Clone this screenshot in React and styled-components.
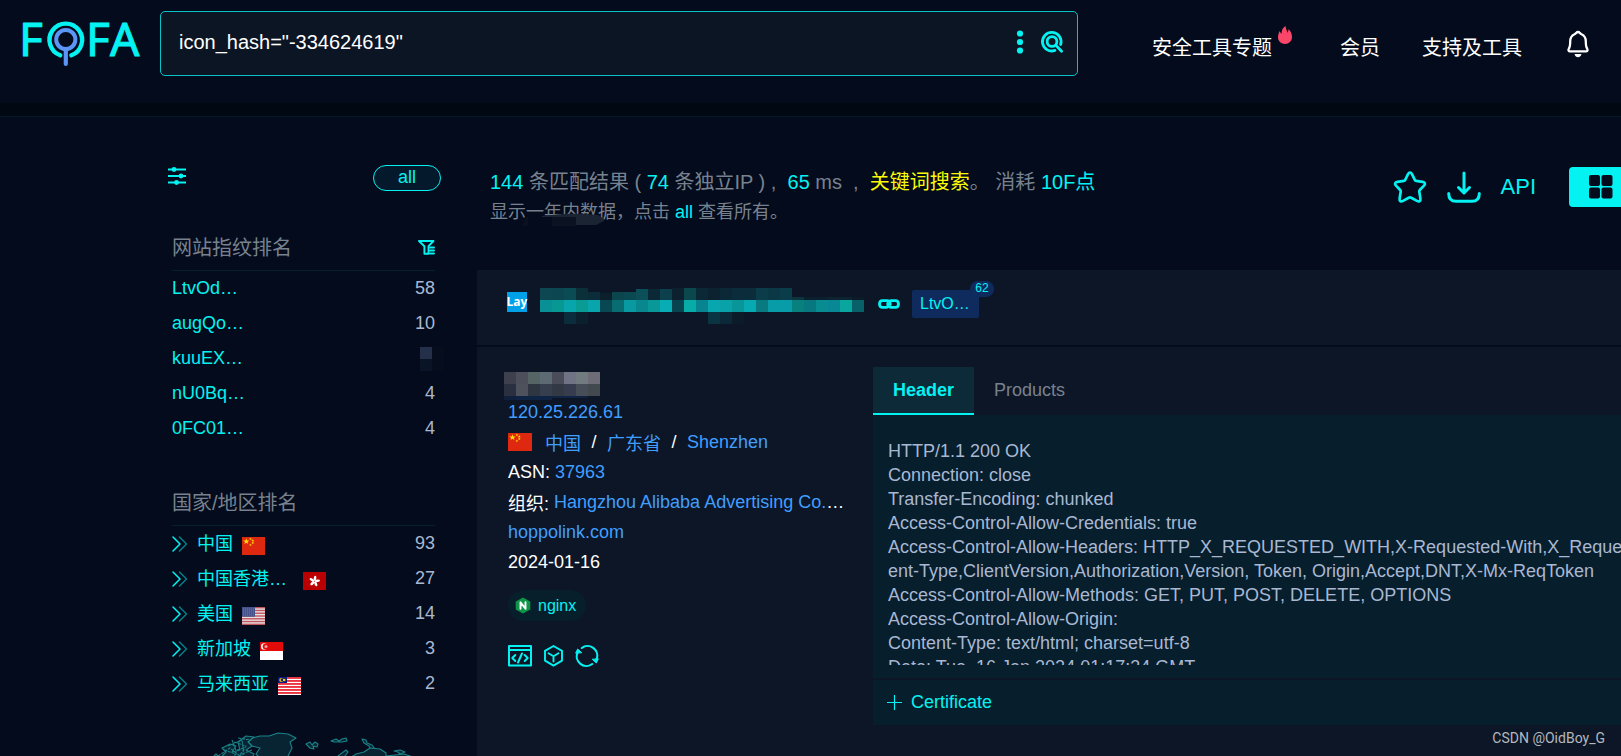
import React from "react";
import styled, { createGlobalStyle } from "styled-components";

const cyan = "#05f2f2";
const blue = "#409eff";
const muted = "#78828f";
const pale = "#a9b8d2";
const ink = "#030b1c";
const surface = "#0d1626";
const panel = "#071e2d";

const GlobalStyle = createGlobalStyle`
  *, *::before, *::after { box-sizing: border-box; }
  body {
    margin: 0;
    background: ${ink};
    color: #fff;
    font-family: "Liberation Sans", "Noto Sans CJK SC", sans-serif;
    font-size: 18px;
  }
  a { color: inherit; text-decoration: none; }
  button, input { font: inherit; color: inherit; }
  button { background: none; border: 0; padding: 0; cursor: pointer; }
  svg { display: block; flex: none; }
  h1, h2, ul, p, pre { margin: 0; padding: 0; }
  ul { list-style: none; }
`;

const Page = styled.div`
  position: relative;
  display: flex;
  flex-direction: column;
  height: 100vh;
  overflow: hidden;
`;

/* ---------- header ---------- */

const Header = styled.header`
  display: flex;
  flex: none;
  align-items: center;
  padding: 11px 29px 27px 17px;
`;

const HeaderBand = styled.div`
  flex: none;
  height: 14px;
  background: #020812;
  border-bottom: 1px solid #04192a;
`;

const LogoLink = styled.a`
  width: 143px;
`;

const SearchForm = styled.form`
  display: flex;
  flex: 1;
  align-items: center;
  gap: 16px;
  height: 65px;
  padding: 0 13px 4px 18px;
  background: #0c1524;
  border: 1px solid #07c3c8;
  border-radius: 5px;
`;

const SearchInput = styled.input`
  flex: 1;
  min-width: 0;
  padding: 2px 0 0;
  background: transparent;
  border: 0;
  outline: none;
  font-size: 20px;
`;

const Nav = styled.nav`
  display: flex;
  align-items: center;
  gap: 42px;
  margin-left: 74px;
  font-size: 20px;
  white-space: nowrap;
`;

const NavLink = styled.a`
  display: flex;
  align-items: flex-start;
  gap: 6px;
  padding-top: 8px;
  line-height: 30px;
`;

const FlameSlot = styled.span`
  width: 20px;
  height: 30px;
  margin-top: -7px;
`;

/* ---------- sidebar ---------- */

const Body = styled.div`
  display: flex;
  flex: 1;
  min-height: 0;
`;

const Sidebar = styled.aside`
  display: flex;
  flex: none;
  flex-direction: column;
  gap: 34px;
  width: 477px;
  padding: 48px 42px 0 172px;
`;

const FilterBar = styled.div`
  display: flex;
  align-items: center;
  justify-content: space-between;
  margin: 0 -6px 0 -4px;
`;

const FilterButton = styled.button`
  padding-bottom: 4px;
`;

const AllPill = styled.button`
  width: 68px;
  height: 26px;
  padding-bottom: 2px;
  background: #041a2c;
  border: 1px solid ${cyan};
  border-radius: 13px;
  color: ${cyan};
  line-height: 22px;
`;

const RankHead = styled.div`
  display: flex;
  align-items: center;
  justify-content: space-between;
  height: 46px;
  border-bottom: 1px solid #06202c;
`;

const RankTitle = styled.h2`
  padding-bottom: 2px;
  color: ${muted};
  font-size: 20px;
  font-weight: 400;
`;

const RankRow = styled.li`
  display: flex;
  align-items: center;
  height: 35px;
  color: ${pale};
`;

const RankName = styled.a`
  min-width: ${(p) => (p.$clipped ? "97px" : "0")};
  padding-bottom: ${(p) => (p.$raised ? "4px" : "0")};
  color: ${cyan};
`;

const RankCount = styled.span`
  margin-left: auto;
`;

const Chevrons = styled.svg`
  margin-right: 10px;
`;

const FlagSlot = styled.span`
  margin-left: 9px;
  padding-top: 4px;
`;

/* ---------- results ---------- */

const Main = styled.main`
  flex: 1;
  min-width: 0;
  overflow: hidden;
`;

const Wide = styled.div`
  display: flex;
  flex-direction: column;
  width: calc(100% + 12px);
  height: 100%;
`;

const ResultBar = styled.div`
  display: flex;
  flex: none;
  justify-content: space-between;
  padding: 50px 0 43px 13px;
`;

const Summary = styled.div`
  position: relative;
  color: ${muted};
  line-height: 30px;
  white-space: pre;
`;

const SummaryLine = styled.p`
  font-size: ${(p) => (p.$small ? "18px" : "20px")};
`;

const Hit = styled.span`
  color: ${(p) => (p.$yellow ? "#fbfb05" : cyan)};
`;

const SummarySmudge = styled.svg`
  position: absolute;
  left: 32px;
  top: 44px;
`;

const Tools = styled.div`
  display: flex;
  align-items: center;
  gap: 20px;
  height: 40px;
`;

const ToolButton = styled.button`
  color: ${cyan};
  font-size: 22px;
`;

const ViewButton = styled.button`
  display: flex;
  align-items: center;
  width: 64px;
  height: 40px;
  margin-left: 13px;
  padding-left: 20px;
  background: ${cyan};
  border-radius: 4px;
`;

const CardHead = styled.div`
  display: flex;
  flex: none;
  align-items: center;
  height: 75px;
  margin-bottom: 2px;
  padding: 0 30px 7px;
  background: ${surface};
`;

const SiteIcon = styled.span`
  display: flex;
  align-items: center;
  justify-content: center;
  width: 20px;
  height: 20px;
  margin-bottom: 4px;
  background: #00a0e9;
  font-family: "Open Sans", sans-serif;
  font-size: 12px;
  font-weight: 700;
  line-height: 20px;
`;

const HostMosaic = styled.svg`
  margin: 4px 14px 0 13px;
`;

const LinkButton = styled.a`
  margin-right: 12px;
`;

const FidTag = styled.a`
  position: relative;
  width: 67px;
  height: 28px;
  padding-left: 8px;
  background: #0f2b5e;
  border-radius: 2px;
  color: ${cyan};
  font-size: 16px;
  line-height: 28px;
`;

const FidBadge = styled.span`
  position: absolute;
  top: -9px;
  right: -15px;
  width: 24px;
  height: 16px;
  background: #0f2b5e;
  border-radius: 8px;
  font-size: 12px;
  line-height: 15px;
  text-align: center;
`;

const CardBody = styled.div`
  display: flex;
  flex: 1;
  padding: 20px 0 0 31px;
  background: ${surface};
`;

const Facts = styled.div`
  flex: none;
  width: 365px;
`;

const Fact = styled.div`
  display: flex;
  align-items: center;
  height: 30px;
  white-space: pre;
`;

const FactLink = styled.a`
  color: ${blue};
`;

const Slash = styled.span`
  width: 26px;
  text-align: center;
`;

const FactFlag = styled.span`
  margin-right: 13px;
`;

const TitleMosaic = styled.svg`
  margin: 8px 0 0 -4px;
`;

const ProductChip = styled.a`
  display: inline-flex;
  align-items: center;
  gap: 7px;
  height: 31px;
  margin-top: 13px;
  padding: 0 10px 0 7px;
  background: #071e2b;
  border-radius: 16px;
  color: ${cyan};
  font-size: 16px;
`;

const Actions = styled.div`
  display: flex;
  align-items: center;
  gap: 12px;
  margin-top: 24px;
`;

const Details = styled.section`
  flex: 1;
  min-width: 0;
`;

const Tabs = styled.div`
  display: flex;
`;

const Tab = styled.button`
  height: 48px;
  padding: 0 20px;
  border-bottom: 2px solid ${(p) => (p.$active ? cyan : "transparent")};
  background: ${(p) => (p.$active ? "#0c2a38" : "transparent")};
  color: ${(p) => (p.$active ? cyan : muted)};
  font-weight: ${(p) => (p.$active ? 700 : 400)};
`;

const RawPanel = styled.div`
  padding: 24px 0 13px 15px;
  background: ${panel};
`;

const RawText = styled.pre`
  height: 226px;
  overflow: hidden;
  color: ${pale};
  font-family: inherit;
  line-height: 24px;
`;

const Certificate = styled.button`
  display: flex;
  align-items: center;
  gap: 9px;
  width: 100%;
  height: 45px;
  margin-top: 2px;
  padding-left: 14px;
  background: ${panel};
  color: ${cyan};
`;

const Watermark = styled.div`
  position: absolute;
  right: 16px;
  bottom: 9px;
  color: #b4b8be;
  font-family: Roboto, sans-serif;
  font-size: 14px;
  line-height: 18px;
`;

/* ---------- drawings ---------- */

function Logo() {
  return (
    <svg width="126" height="65" viewBox="17 11 126 65" overflow="visible" role="img" aria-label="FOFA">
      <g fill={cyan} stroke={cyan} strokeWidth="1" strokeLinejoin="round" fontFamily="'Noto Sans', sans-serif" fontSize="46">
        <text x="19" y="56">F</text>
        <text x="86" y="56">F</text>
        <text x="110" y="56">A</text>
      </g>
      <path d="M60.2 55.2A16.3 16.3 0 1 1 71.4 55.2" fill="none" stroke={cyan} strokeWidth="4.4" strokeLinecap="round" />
      <circle cx="65.8" cy="39.5" r="9.6" fill="none" stroke="#5b96f7" strokeWidth="4" />
      <path d="M65.8 49V64" stroke="#5b96f7" strokeWidth="4.2" strokeLinecap="round" />
    </svg>
  );
}

const line = { fill: "none", stroke: cyan, strokeLinecap: "round", strokeLinejoin: "round" };

function Dots() {
  return (
    <svg width="8" height="26" fill={cyan}>
      <circle cx="4" cy="4.5" r="3.1" />
      <circle cx="4" cy="13" r="3.1" />
      <circle cx="4" cy="21.5" r="3.1" />
    </svg>
  );
}

function SearchIcon() {
  return (
    <svg width="24" height="24" viewBox="0 0 24 24" {...line} strokeWidth="2.8">
      <path d="M14.9 20.4A9.300 9.300 0 1 1 20.600 14.500" />
      <circle cx="12" cy="11.500" r="4.9" />
      <path d="M15.8 15.3L21.6 21.2" />
    </svg>
  );
}

function Flame() {
  return (
    <svg width="14" height="18" viewBox="0 0 14 18" fill="#fa4669">
      <path d="M7.600 0C7.500 2.500 9 4 9.300 6.800C10 6 10.600 4.800 10.500 3C12.800 5 14 8 14 11C14 15 11 18 7 18C3 18 0 15.200 0 11.300C0 8.800 .8 7 1.500 5C2.200 6 2.600 7 3.600 7.800C3.400 4 5 1.400 7.600 0Z" />
    </svg>
  );
}

function Bell() {
  return (
    <svg width="28" height="28" viewBox="0 0 28 28" fill="none" stroke="#fff" strokeWidth="2.300" strokeLinejoin="round">
      <path d="M14 2C12.300 2 12.200 3.600 10.500 4.300C7.500 5.600 6.200 8.300 6.200 11.500C6.200 15.500 6 17 4.900 18.500C4.100 20 4.400 21.300 5.600 21.300H22.400C23.600 21.300 23.900 20 23.100 18.500C22 17 21.800 15.500 21.800 11.500C21.800 8.300 20.500 5.600 17.500 4.300C15.800 3.600 15.700 2 14 2Z" />
      <path d="M10.500 24H17.500C16.900 26.200 15.500 27.300 14 27.300S11.100 26.200 10.500 24Z" fill="#fff" stroke="none" />
    </svg>
  );
}

function Sliders() {
  return (
    <svg width="18" height="18" viewBox="0 0 18 18" stroke={cyan} fill={cyan} strokeWidth="1.8">
      <path d="M0 2.500H18M0 9H18M0 15.500H18" />
      <g stroke="none">
        <circle cx="6" cy="2.500" r="2.400" />
        <circle cx="13" cy="9" r="2.400" />
        <circle cx="8.500" cy="15.500" r="2.400" />
      </g>
    </svg>
  );
}

function Funnel() {
  return (
    <svg width="17" height="15" viewBox="0 0 17 15" {...line} strokeWidth="1.900">
      <path d="M1 1H15.500L10.500 6.200V13.800H6.400V6.200Z" />
      <path d="M12 7.500H16M12 10.500H16M12 13.500H16" />
    </svg>
  );
}

function DoubleChevron() {
  return (
    <Chevrons width="15" height="16" viewBox="0 0 15 16" {...line} strokeWidth="1.5">
      <path d="M1 1L8 8L1 15" />
      <path d="M7.500 1L14.500 8L7.500 15" opacity=".5" />
    </Chevrons>
  );
}

const star = (cx, cy, r) =>
  Array.from({ length: 10 }, (_, i) => {
    const a = (Math.PI * i) / 5 - Math.PI / 2;
    const q = i % 2 ? r * 0.4 : r;
    return `${(cx + q * Math.cos(a)).toFixed(2)},${(cy + q * Math.sin(a)).toFixed(2)}`;
  }).join(" ");

function Flag({ code, width = 23 }) {
  return (
    <svg width={width} height="18" viewBox="0 0 23 18" preserveAspectRatio="none">
      {code === "cn" && (
        <>
          <rect width="23" height="18" fill="#de2910" />
          <g fill="#ffde00">
            <polygon points={star(4.300, 4.500, 3.200)} />
            <polygon points={star(8.500, 1.900, 1.500)} />
            <polygon points={star(10.800, 3.600, 1.500)} />
            <polygon points={star(10.800, 6, 1.500)} />
            <polygon points={star(8.500, 7.900, 1.500)} />
          </g>
        </>
      )}
      {code === "hk" && (
        <>
          <rect width="23" height="18" fill="#ba0000" />
          <g fill="#fff">
            {[0, 72, 144, 216, 288].map((a) => (
              <ellipse key={a} cx="11.500" cy="6.300" rx="1.300" ry="2.600" transform={`rotate(${a + 10} 11.5 9.200)`} />
            ))}
          </g>
        </>
      )}
      {code === "us" && (
        <>
          <rect width="23" height="18" fill="#e9e0e2" />
          {[0, 1, 2, 3, 4, 5, 6].map((i) => (
            <rect key={i} y={i * 2.77} width="23" height="1.400" fill="#c05560" />
          ))}
          <rect width="13" height="9.700" fill="#46538a" />
          <path d="M1 2H12M1 4H12M1 6H12M1 8H12" stroke="#6c78a2" strokeDasharray="1 1" />
        </>
      )}
      {code === "sg" && (
        <>
          <rect width="23" height="18" fill="#fff" />
          <rect width="23" height="9" fill="#e30a0a" />
          <circle cx="4.300" cy="4.500" r="3.300" fill="#fff" />
          <circle cx="5.600" cy="4.500" r="2.900" fill="#e30a0a" />
          <circle cx="6" cy="4.500" r="1.500" fill="#f6a0a0" />
        </>
      )}
      {code === "my" && (
        <>
          <rect width="23" height="18" fill="#fff" />
          {[0, 1, 2, 3, 4, 5].map((i) => (
            <rect key={i} y={i * 3} width="23" height="1.900" fill="#ea3340" />
          ))}
          <rect width="9" height="6" fill="#0b1a80" />
          <circle cx="3.300" cy="3" r="2" fill="#ffd400" />
          <circle cx="4" cy="3" r="1.400" fill="#0b1a80" />
          <circle cx="6.200" cy="3" r="1.300" fill="#ffd400" />
        </>
      )}
    </svg>
  );
}

function Mosaic({ rows, as: Svg = "svg", ...rest }) {
  return (
    <Svg {...rest} shapeRendering="crispEdges" aria-hidden="true">
      {rows.flatMap(([y, h, colors]) =>
        colors.map((c, i) => c && <rect key={`${y}-${i}`} x={i * 12} y={y} width="12" height={h} fill={c} />)
      )}
    </Svg>
  );
}

const hostCells = [
  [0, 12, ["#0d4852", "#0c4650", "#0b4c54", "#0b303a", null, null, null, null, null, null, null, "#0c202f", "#0b484e", "#0b2836", "#0c2230", "#0b2836", "#0b2c3a", "#0b2c3a", "#0b3c4a", "#0b3845", "#0b3c4a"]],
  [4, 8, [null, null, null, null, "#0b2c39", null, "#0b464f", "#0a4852"]],
  [1, 11, [null, null, null, null, null, null, null, null, "#0b5058", "#0b2836", "#0b404c"]],
  [5, 7, [null, null, null, null, null, "#0b1f2c"]],
  [9, 3, [null, null, null, null, null, null, null, null, null, null, null, null, null, null, null, null, null, null, null, null, null, "#0b343f", "#0b202c", "#0b202c", "#0b2430", "#0b2430", "#0b1c28"]],
  [12, 12, ["#089096", "#089894", "#08a6ac", "#089c94", "#08a6ac", "#084852", "#086c70", "#089aa0", "#08888e", "#089898", "#08acb4", "#084450", "#08aca6", "#088490", "#08a6ae", "#08a2a8", "#089698", "#08aab2", "#087a80", "#089ca8", "#089ca8", "#08807e", "#087880", "#088c92", "#088894", "#08a69c", "#086068"]],
  [24, 12, [null, null, "#0b2c3a", "#0b202c", null, null, null, null, null, null, null, null, null, null, "#0b3442", "#0b2838", "#0b1c28"]],
];

const titleCells = [
  [0, 12, ["#3f404e", "#4d505a", "#566466", "#5c6a74", "#4a4c5a", "#707384", "#727c80", "#6e6c76"]],
  [12, 12, ["#2b3040", "#4d525c", "#2e3642", "#353f4d", "#333944", "#373c4f", "#484e58", "#424a50"]],
  [24, 4, ["#0f1f3c", "#0f2344", "#0f2344", "#0f2344"]],
  [24, 2, [null, null, null, null, "#0f2344", "#0f2344", "#0f2040"]],
];

function WorldMap() {
  return (
    <svg width="232" height="110" viewBox="0 15 232 110" overflow="visible" stroke="#1b8288" strokeWidth="1.100" strokeLinejoin="round" fill="#082432">
      <path d="M80 18L88 16L97 16L106 13L116 14L124 18L118 22L120 28L116 36L110 46L104 54L96 50L90 40L84 34L88 28L80 26L76 22Z" />
      <path d="M38 40L44 34L48 38L54 32L50 28L58 24L64 26L60 32L68 30L66 22L74 16L82 17L76 22L80 26L74 30L82 34L78 42L68 40L60 46L48 44Z" />
      <path d="M52 30L64 34L58 40L44 38M62 22L74 26L66 38L78 38M56 26L70 20L72 34L50 42M46 36L58 28L68 36L62 44L80 46M60 20L64 30L72 28M42 40L52 36L60 38M66 18L78 20M70 34L80 30" fill="none" strokeDasharray="3 1" />
      <path d="M134 24L138 22L140 25L143 22L146 24L145 27L141 26L142 29L138 28ZM159 21L164 19L167 21L170 19L174 18L175 21L170 22L162 22Z" />
      <path d="M190 19L194 20L195 23L200 25L203 29L199 30L197 26L192 23ZM222 31L228 30L233 32L228 34L226 32Z" />
      <path d="M162 46L166 36L174 30L176 32L170 40L178 38L184 34L192 32L198 28L208 29L214 33L214 36L232 34L250 40L256 50L240 70L200 90L170 80Z" />
    </svg>
  );
}

function StarIcon() {
  return (
    <svg width="34" height="34" viewBox="0 0 34 34" {...line} strokeWidth="2.700">
      <path d="M17 2.500C17.800 2.500 18.500 3.100 19 4.200L21.800 9.800C22.100 10.400 22.500 10.700 23.200 10.800L29.500 11.800C32 12.300 32.700 13.900 31 15.600L26.800 20C26.300 20.500 26.200 21 26.300 21.700L27.400 28.500C27.700 31.100 26.300 32.100 24 30.900L18.200 27.700C17.400 27.300 16.600 27.300 15.800 27.700L10 30.900C7.700 32.100 6.300 31.100 6.600 28.500L7.700 21.700C7.800 21 7.700 20.500 7.200 20L3 15.600C1.300 13.900 2 12.300 4.500 11.800L10.800 10.800C11.500 10.700 11.900 10.400 12.200 9.800L15 4.200C15.500 3.100 16.200 2.500 17 2.500Z" />
    </svg>
  );
}

function DownloadIcon() {
  return (
    <svg width="34" height="34" viewBox="0 0 34 34" {...line} strokeWidth="3">
      <path d="M17 3V23M11.500 17.500L17 23L22.500 17.500" />
      <path d="M1.700 23.500C1.700 29 4 31.300 9 31.300H25C30 31.300 32.300 29 32.300 23.500" />
    </svg>
  );
}

function GridIcon() {
  return (
    <svg width="24" height="24" viewBox="0 0 24 24" fill={ink}>
      <rect width="11" height="11" rx="2" />
      <rect x="12.500" width="11" height="11" rx="2" />
      <rect y="12.500" width="11" height="11" rx="2" />
      <rect x="12.500" y="12.500" width="11" height="11" rx="2" />
    </svg>
  );
}

function ChainIcon() {
  return (
    <svg width="22" height="10" viewBox="0 0 22 10" {...line} strokeWidth="2.800">
      <path d="M9 8.300H4.500C2.500 8.300 1.500 7.300 1.500 5S2.500 1.700 4.500 1.700H9C11 1.700 12.300 3 12.300 5.500" />
      <path d="M13 1.700H17.500C19.500 1.700 20.500 2.700 20.500 5S19.500 8.300 17.500 8.300H13C11 8.300 9.700 7 9.700 4.500" />
    </svg>
  );
}

function NginxIcon() {
  return (
    <svg width="16" height="17" viewBox="0 0 16 17">
      <path d="M8 .5L15.300 4.500V12.500L8 16.500L.7 12.500V4.500Z" fill="#0f9548" />
      <path d="M5.500 11.700V5.300L10.500 11.700V5.300" fill="none" stroke="#fff" strokeWidth="1.900" strokeLinejoin="round" strokeLinecap="round" />
    </svg>
  );
}

function CodeWindow() {
  return (
    <svg width="24" height="22" viewBox="0 0 24 22" {...line} strokeWidth="2">
      <rect x="1" y="1" width="22" height="19.500" />
      <path d="M1 5H23M7.300 10L4.300 13L7.300 16M16.700 10L19.700 13L16.700 16M14 8.500L10 17.500" />
    </svg>
  );
}

function CubeIcon() {
  return (
    <svg width="19" height="22" viewBox="0 0 19 22" {...line} strokeWidth="1.900">
      <path d="M9.500 1L18 5.800V15.600L9.500 20.600L1 15.600V5.800Z" />
      <path d="M4.500 8.300L9.500 11.300L14.500 8.300M9.500 11.300V16.500" />
    </svg>
  );
}

function RefreshIcon() {
  return (
    <svg width="24" height="22" viewBox="0 0 24 22" {...line} strokeWidth="2.100">
      <path d="M6.800 3A9.600 9.600 0 0 1 21.400 14.500M17.200 19A9.600 9.600 0 0 1 2.600 7.500" />
      <path d="M17.500 14.500L21.300 18L23.200 14.200ZM6.500 7.500L2.700 4L.8 7.800Z" fill={cyan} strokeWidth="1" />
    </svg>
  );
}

function Plus() {
  return (
    <svg width="15" height="15" viewBox="0 0 15 15" stroke={cyan} strokeWidth="1.200">
      <path d="M0 7.500H15M7.500 0V15" />
    </svg>
  );
}

/* ---------- data ---------- */

const fingerprints = [
  ["LtvOd…", "58"],
  ["augQo…", "10"],
  ["kuuEX…", null],
  ["nU0Bq…", "4"],
  ["0FC01…", "4"],
];

const countries = [
  { name: "中国", flag: "cn", count: 93 },
  { name: "中国香港…", flag: "hk", count: 27, clipped: true },
  { name: "美国", flag: "us", count: 14 },
  { name: "新加坡", flag: "sg", count: 3 },
  { name: "马来西亚", flag: "my", count: 2 },
];

const rawHeader = `HTTP/1.1 200 OK
Connection: close
Transfer-Encoding: chunked
Access-Control-Allow-Credentials: true
Access-Control-Allow-Headers: HTTP_X_REQUESTED_WITH,X-Requested-With,X_Requeste
ent-Type,ClientVersion,Authorization,Version, Token, Origin,Accept,DNT,X-Mx-ReqToken
Access-Control-Allow-Methods: GET, PUT, POST, DELETE, OPTIONS
Access-Control-Allow-Origin:
Content-Type: text/html; charset=utf-8
Date: Tue, 16 Jan 2024 01:17:34 GMT`;

export default function App() {
  return (
    <Page>
      <GlobalStyle />
      <Header>
        <LogoLink href="#home"><Logo /></LogoLink>
        <SearchForm onSubmit={(e) => e.preventDefault()}>
          <SearchInput aria-label="搜索" defaultValue={'icon_hash="-334624619"'} />
          <button type="button" aria-label="更多"><Dots /></button>
          <button type="submit" aria-label="搜索"><SearchIcon /></button>
        </SearchForm>
        <Nav>
          <NavLink href="#topics">安全工具专题<FlameSlot><Flame /></FlameSlot></NavLink>
          <NavLink href="#vip">会员</NavLink>
          <NavLink href="#support">支持及工具</NavLink>
          <button type="button" aria-label="通知"><Bell /></button>
        </Nav>
      </Header>
      <HeaderBand />
      <Body>
        <Sidebar>
          <FilterBar>
            <FilterButton type="button" aria-label="筛选"><Sliders /></FilterButton>
            <AllPill type="button">all</AllPill>
          </FilterBar>
          <section>
            <RankHead>
              <RankTitle>网站指纹排名</RankTitle>
              <button type="button" aria-label="过滤"><Funnel /></button>
            </RankHead>
            <ul>
              {fingerprints.map(([name, count]) => (
                <RankRow key={name}>
                  <RankName href="#fid">{name}</RankName>
                  <RankCount>
                    {count ?? (
                      <svg width="15" height="24" overflow="visible" shapeRendering="crispEdges">
                        <rect width="12" height="12" fill="#24304a" />
                        <rect y="12" width="12" height="12" fill="#091526" />
                        <rect x="12" width="12" height="24" fill="#060e1d" />
                      </svg>
                    )}
                  </RankCount>
                </RankRow>
              ))}
            </ul>
          </section>
          <section>
            <RankHead>
              <RankTitle>国家/地区排名</RankTitle>
            </RankHead>
            <ul>
              {countries.map((c) => (
                <RankRow key={c.flag}>
                  <DoubleChevron />
                  <RankName href="#country" $raised $clipped={c.clipped}>{c.name}</RankName>
                  <FlagSlot><Flag code={c.flag} /></FlagSlot>
                  <RankCount>{c.count}</RankCount>
                </RankRow>
              ))}
            </ul>
          </section>
          <WorldMap />
        </Sidebar>
        <Main>
          <Wide>
            <ResultBar>
              <Summary>
                <SummaryLine>
                  <Hit>144</Hit> 条匹配结果 ( <Hit>74</Hit> 条独立IP ) ,  <Hit>65</Hit> ms  ,  <Hit $yellow>关键词搜索</Hit>。 消耗 <Hit>10F点</Hit>
                </SummaryLine>
                <SummaryLine $small>
                  显示一年内数据，点击 <Hit>all</Hit> 查看所有。
                </SummaryLine>
                <SummarySmudge width="82" height="16" aria-hidden="true">
                  <path d="M0 15L4 6H6V15Z" fill="#0a1020" />
                  <path d="M20 5Q50 1 76 4L82 8V10L74 14H54V6L20 6Z" fill="#1b2433" />
                  <rect x="30" y="6" width="24" height="9" fill="#0b1221" />
                </SummarySmudge>
              </Summary>
              <Tools>
                <ToolButton type="button" aria-label="收藏"><StarIcon /></ToolButton>
                <ToolButton type="button" aria-label="下载"><DownloadIcon /></ToolButton>
                <ToolButton type="button">API</ToolButton>
                <ViewButton type="button" aria-label="网格视图"><GridIcon /></ViewButton>
              </Tools>
            </ResultBar>
            <CardHead>
              <SiteIcon>Lay</SiteIcon>
              <Mosaic as={HostMosaic} rows={hostCells} width="324" height="36" />
              <LinkButton href="#open" aria-label="打开链接"><ChainIcon /></LinkButton>
              <FidTag href="#fid">LtvO…<FidBadge>62</FidBadge></FidTag>
            </CardHead>
            <CardBody>
              <Facts>
                <Fact><Mosaic as={TitleMosaic} rows={titleCells} width="96" height="28" /></Fact>
                <Fact><FactLink href="#ip">120.25.226.61</FactLink></Fact>
                <Fact>
                  <FactFlag><Flag code="cn" width={24} /></FactFlag>
                  <FactLink href="#country">中国</FactLink>
                  <Slash>/</Slash>
                  <FactLink href="#region">广东省</FactLink>
                  <Slash>/</Slash>
                  <FactLink href="#city">Shenzhen</FactLink>
                </Fact>
                <Fact>ASN: <FactLink href="#asn">37963</FactLink></Fact>
                <Fact>组织: <FactLink href="#org">Hangzhou Alibaba Advertising Co.</FactLink>…</Fact>
                <Fact><FactLink href="#domain">hoppolink.com</FactLink></Fact>
                <Fact>2024-01-16</Fact>
                <ProductChip href="#nginx"><NginxIcon />nginx</ProductChip>
                <Actions>
                  <button type="button" aria-label="源代码"><CodeWindow /></button>
                  <button type="button" aria-label="组件"><CubeIcon /></button>
                  <button type="button" aria-label="刷新"><RefreshIcon /></button>
                </Actions>
              </Facts>
              <Details>
                <Tabs role="tablist">
                  <Tab type="button" role="tab" aria-selected="true" $active>Header</Tab>
                  <Tab type="button" role="tab" aria-selected="false">Products</Tab>
                </Tabs>
                <RawPanel>
                  <RawText>{rawHeader}</RawText>
                </RawPanel>
                <Certificate type="button"><Plus />Certificate</Certificate>
              </Details>
            </CardBody>
          </Wide>
        </Main>
      </Body>
      <Watermark>CSDN @OidBoy_G</Watermark>
    </Page>
  );
}
